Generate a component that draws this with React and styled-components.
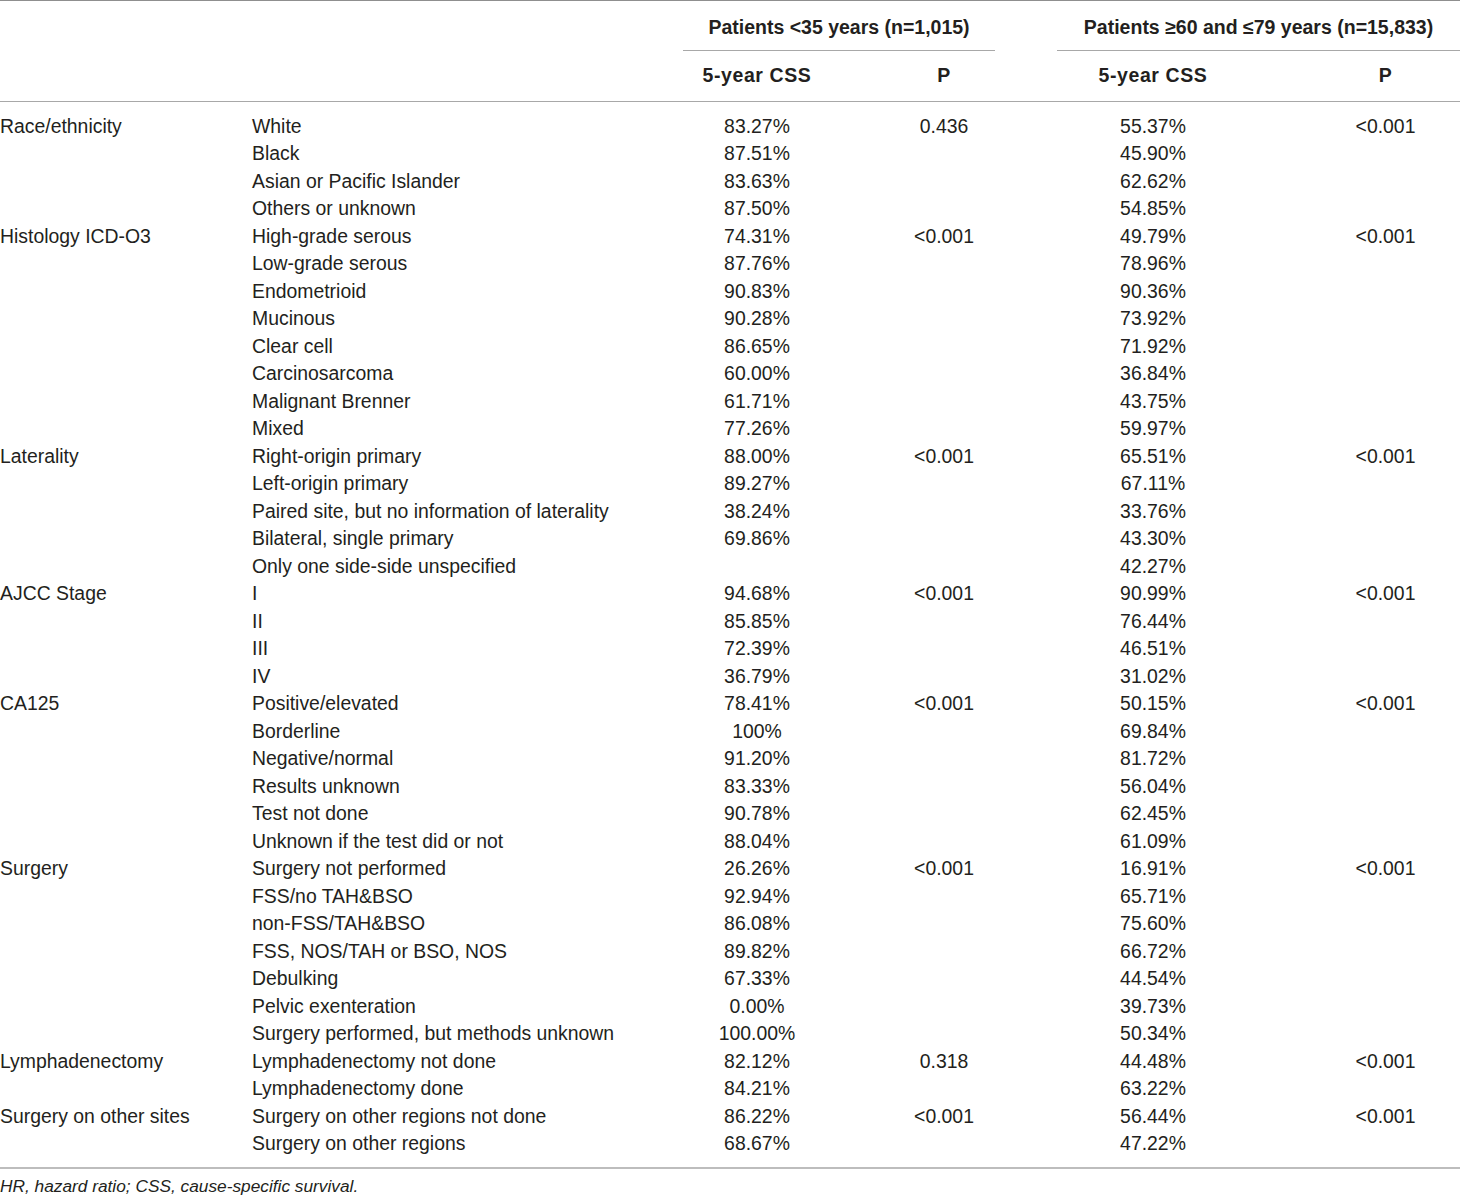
import React from "react";
import styled, { createGlobalStyle } from "styled-components";

const GlobalStyle = createGlobalStyle`
  body {
    margin: 0;
    background: #ffffff;
  }
`;

const Page = styled.div`
  width: 1460px;
  font-family: "Liberation Sans", Arial, sans-serif;
  color: #231f20;
`;

const Table = styled.table`
  width: 1460px;
  table-layout: fixed;
  border-collapse: collapse;
  border-top: 1px solid #8f8f8f;
  border-bottom: 2px solid #bdbdbd;
  font-size: 19.4px;
`;

const HeadRow = styled.tr`
  height: 50px;
  border-bottom: ${(p) => (p.$last ? "1px solid #a8a8a8" : "none")};
`;

const HeadCell = styled.th`
  padding: 0;
  font-weight: bold;
  font-size: 19.5px;
  letter-spacing: 0.6px;
  white-space: nowrap;
  text-align: center;
  vertical-align: middle;
  padding-left: ${(p) => p.$indent || "0"};
`;

const GroupLabel = styled.div`
  height: 49px;
  line-height: 52px;
  border-bottom: 1px solid #a8a8a8;
  margin-right: ${(p) => p.$gap || "0"};
  letter-spacing: 0;
  white-space: nowrap;
`;

const Row = styled.tr`
  height: 27.5px;

  &:first-child td {
    padding-top: 11px;
  }

  &:last-child td {
    padding-bottom: 9px;
  }
`;

const Cell = styled.td`
  padding: 0;
  line-height: 27.5px;
  white-space: nowrap;
  text-align: ${(p) => (p.$center ? "center" : "left")};
  padding-left: ${(p) => p.$indent || "0"};
  vertical-align: top;
`;

const Footnote = styled.p`
  margin: 0;
  padding-top: 6px;
  font-size: 17.3px;
  font-style: italic;
  color: #231f20;
  line-height: 22px;
`;

const groups = [
  {
    name: "Race/ethnicity",
    p1: "0.436",
    p2: "<0.001",
    rows: [
      ["White", "83.27%", "55.37%"],
      ["Black", "87.51%", "45.90%"],
      ["Asian or Pacific Islander", "83.63%", "62.62%"],
      ["Others or unknown", "87.50%", "54.85%"],
    ],
  },
  {
    name: "Histology ICD-O3",
    p1: "<0.001",
    p2: "<0.001",
    rows: [
      ["High-grade serous", "74.31%", "49.79%"],
      ["Low-grade serous", "87.76%", "78.96%"],
      ["Endometrioid", "90.83%", "90.36%"],
      ["Mucinous", "90.28%", "73.92%"],
      ["Clear cell", "86.65%", "71.92%"],
      ["Carcinosarcoma", "60.00%", "36.84%"],
      ["Malignant Brenner", "61.71%", "43.75%"],
      ["Mixed", "77.26%", "59.97%"],
    ],
  },
  {
    name: "Laterality",
    p1: "<0.001",
    p2: "<0.001",
    rows: [
      ["Right-origin primary", "88.00%", "65.51%"],
      ["Left-origin primary", "89.27%", "67.11%"],
      ["Paired site, but no information of laterality", "38.24%", "33.76%"],
      ["Bilateral, single primary", "69.86%", "43.30%"],
      ["Only one side-side unspecified", "", "42.27%"],
    ],
  },
  {
    name: "AJCC Stage",
    p1: "<0.001",
    p2: "<0.001",
    rows: [
      ["I", "94.68%", "90.99%"],
      ["II", "85.85%", "76.44%"],
      ["III", "72.39%", "46.51%"],
      ["IV", "36.79%", "31.02%"],
    ],
  },
  {
    name: "CA125",
    p1: "<0.001",
    p2: "<0.001",
    rows: [
      ["Positive/elevated", "78.41%", "50.15%"],
      ["Borderline", "100%", "69.84%"],
      ["Negative/normal", "91.20%", "81.72%"],
      ["Results unknown", "83.33%", "56.04%"],
      ["Test not done", "90.78%", "62.45%"],
      ["Unknown if the test did or not", "88.04%", "61.09%"],
    ],
  },
  {
    name: "Surgery",
    p1: "<0.001",
    p2: "<0.001",
    rows: [
      ["Surgery not performed", "26.26%", "16.91%"],
      ["FSS/no TAH&BSO", "92.94%", "65.71%"],
      ["non-FSS/TAH&BSO", "86.08%", "75.60%"],
      ["FSS, NOS/TAH or BSO, NOS", "89.82%", "66.72%"],
      ["Debulking", "67.33%", "44.54%"],
      ["Pelvic exenteration", "0.00%", "39.73%"],
      ["Surgery performed, but methods unknown", "100.00%", "50.34%"],
    ],
  },
  {
    name: "Lymphadenectomy",
    p1: "0.318",
    p2: "<0.001",
    rows: [
      ["Lymphadenectomy not done", "82.12%", "44.48%"],
      ["Lymphadenectomy done", "84.21%", "63.22%"],
    ],
  },
  {
    name: "Surgery on other sites",
    p1: "<0.001",
    p2: "<0.001",
    rows: [
      ["Surgery on other regions not done", "86.22%", "56.44%"],
      ["Surgery on other regions", "68.67%", "47.22%"],
    ],
  },
];

const App = () => {
  const rows = [];
  groups.forEach((g) => {
    g.rows.forEach((r, i) => {
      rows.push(
        <Row key={g.name + i}>
          <Cell>{i === 0 ? g.name : ""}</Cell>
          <Cell>{r[0]}</Cell>
          <Cell $center>{r[1]}</Cell>
          <Cell $center>{i === 0 ? g.p1 : ""}</Cell>
          <Cell $center>{r[2]}</Cell>
          <Cell $center $indent="62px">{i === 0 ? g.p2 : ""}</Cell>
        </Row>
      );
    });
  });

  return (
    <Page>
      <GlobalStyle />
      <Table>
        <colgroup>
          <col style={{ width: 252 }} />
          <col style={{ width: 431 }} />
          <col style={{ width: 148 }} />
          <col style={{ width: 226 }} />
          <col style={{ width: 192 }} />
          <col style={{ width: 211 }} />
        </colgroup>
        <thead>
          <HeadRow>
            <HeadCell />
            <HeadCell />
            <HeadCell colSpan={2}>
              <GroupLabel $gap="62px">Patients &lt;35 years (n=1,015)</GroupLabel>
            </HeadCell>
            <HeadCell colSpan={2}>
              <GroupLabel>Patients ≥60 and ≤79 years (n=15,833)</GroupLabel>
            </HeadCell>
          </HeadRow>
          <HeadRow $last>
            <HeadCell />
            <HeadCell />
            <HeadCell>5-year CSS</HeadCell>
            <HeadCell>P</HeadCell>
            <HeadCell>5-year CSS</HeadCell>
            <HeadCell $indent="62px">P</HeadCell>
          </HeadRow>
        </thead>
        <tbody>{rows}</tbody>
      </Table>
      <Footnote>HR, hazard ratio; CSS, cause-specific survival.</Footnote>
    </Page>
  );
};

export default App;
